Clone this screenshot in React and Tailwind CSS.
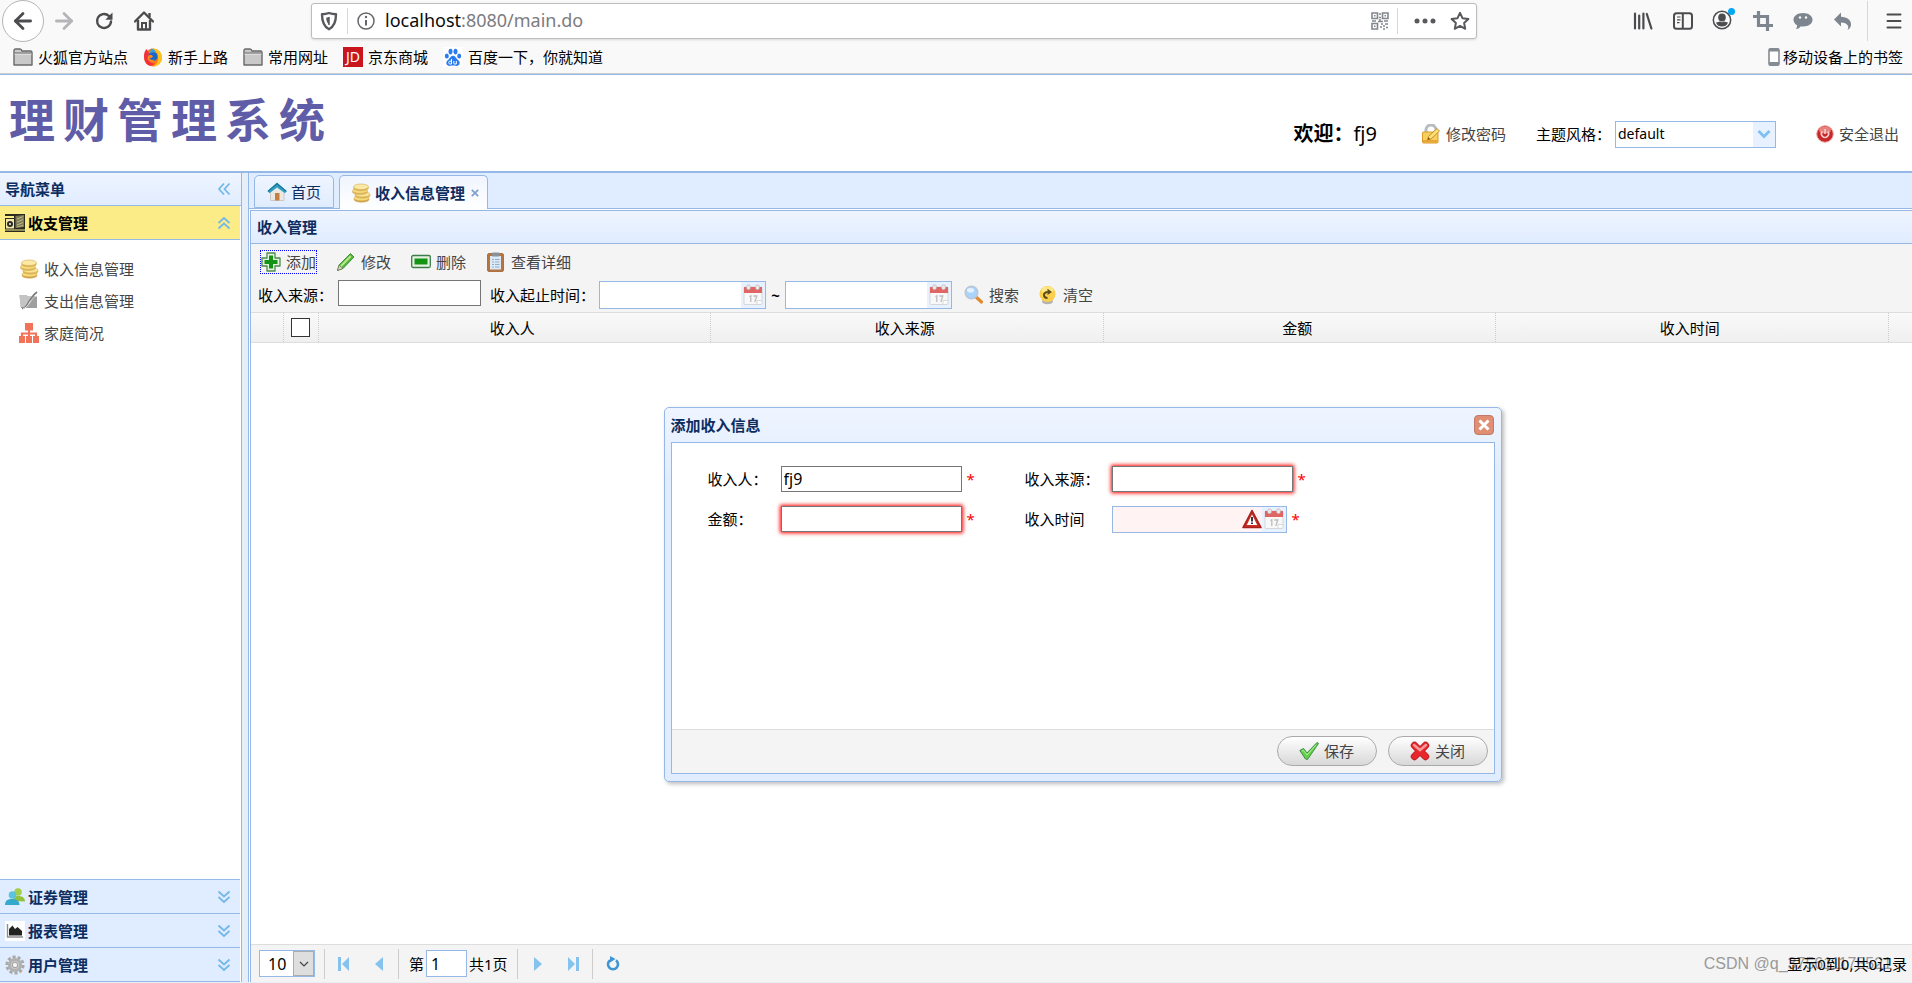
import React from 'react'
import { ArrowLeft, ArrowRight } from 'lucide-react'

/* ---------- browser icons ---------- */

const ReloadIcon = () => (
  <svg width="20" height="20" viewBox="0 0 20 20" fill="none" stroke="#4c4c4f" strokeWidth="2.4">
    <path d="M17 10.5a7 7 0 1 1-2.2-5.6l1.6 1.6" strokeLinecap="round" />
    <path d="M18.5 1.5v7.2h-7.2z" fill="#4c4c4f" stroke="none" />
  </svg>
)

const HomeIcon = () => (
  <svg width="20" height="20" viewBox="0 0 20 20" fill="none" stroke="#4c4c4f" strokeWidth="2.4">
    <path d="M1 10.5 10 1.5l9 9" strokeLinecap="round" strokeLinejoin="round" />
    <path d="M4 9v9.5h12V9" strokeLinejoin="round" />
    <path d="M8 18v-6h4v6" strokeWidth="2" />
    <path d="M15.5 2v4" />
  </svg>
)

const ShieldIcon = () => (
  <svg width="18" height="20" viewBox="0 0 18 20" fill="none" stroke="#59595d" strokeWidth="2.4">
    <path d="M9 2c2.6 1 5 1.2 7 1.2 0 7-1.2 12-7 15C3.2 15.2 2 10.2 2 3.2 4 3.2 6.4 3 9 2z" strokeLinejoin="round" />
    <path d="M9 6v7.5c-2-1.500-2.600-3.500-2.800-6.800z" fill="#59595d" stroke="none" />
    <path d="M9 6v8" strokeWidth="1.500" />
  </svg>
)

const InfoIcon = () => (
  <svg width="18" height="18" viewBox="0 0 18 18" fill="none" stroke="#66666a" strokeWidth="1.500">
    <circle cx="9" cy="9" r="8" />
    <path d="M9 8v5.500" strokeWidth="2" />
    <circle cx="9" cy="5" r="1.200" fill="#66666a" stroke="none" />
  </svg>
)

const QrIcon = () => (
  <svg width="18" height="18" viewBox="0 0 18 18" fill="none" stroke="#82878e" strokeWidth="1.600">
    <path d="M1 1h5.500v5.500H1zM11.500 1H17v5.500h-5.500zM1 11.500h5.500V17H1z" />
    <path d="M3 3.800h1.500M13.500 3.800H15M3 14.300h1.500M8 2h2M8 5.500h2M9 7v3M1 9h4M7 9.500h5M13 9h4M10 12h2M14 12h3M12 14h2M9 15h2M15 15.500h2M12 17h2" />
  </svg>
)

const StarIcon = () => (
  <svg width="20" height="20" viewBox="0 0 20 20" fill="none" stroke="#59595d" strokeWidth="2" strokeLinejoin="round">
    <path d="m10 1.800 2.500 5.400 5.900.7-4.300 4 1.100 5.900-5.200-2.900-5.200 2.900 1.100-5.900-4.300-4 5.900-.7z" />
  </svg>
)

const DotsIcon = () => (
  <svg width="22" height="6" viewBox="0 0 22 6" fill="#59595d">
    <circle cx="3" cy="3" r="2.500" />
    <circle cx="11" cy="3" r="2.500" />
    <circle cx="19" cy="3" r="2.500" />
  </svg>
)

const LibraryIcon = () => (
  <svg width="20" height="18" viewBox="0 0 20 18" fill="none" stroke="#4c4c4f" strokeWidth="2.200" strokeLinecap="round">
    <path d="M2 1.500v15M6.200 3.500v13M10.400 1.500v15M13.800 2l4.600 14.500" />
  </svg>
)

const SidebarIcon = () => (
  <svg width="20" height="18" viewBox="0 0 20 18" fill="none" stroke="#4c4c4f" strokeWidth="2">
    <rect x="1" y="1.200" width="18" height="15.600" rx="2.500" />
    <path d="M9.800 1.500v15" />
    <path d="M4 5h3.500M4 7.800h3.500M4 10.600h2.500" strokeWidth="1.200" />
  </svg>
)

const AccountIcon = () => (
  <svg width="24" height="24" viewBox="0 0 24 24">
    <circle cx="11" cy="13" r="8.700" fill="none" stroke="#4c4c4f" strokeWidth="1.500" />
    <ellipse cx="11" cy="10.500" rx="3.800" ry="4" fill="#4c4c4f" />
    <path d="M5 15.500c2 0 3-1 3.800-1 1.500 1 3 1 4.400 0 .8 0 2 1 3.800 1-1 3-3.500 4-6 4s-5-1-6-4z" fill="#4c4c4f" />
    <circle cx="20.500" cy="4.500" r="3.500" fill="#00a8f5" />
  </svg>
)

const CropIcon = () => (
  <svg width="20" height="20" viewBox="0 0 20 20" fill="none" stroke="#7d858e" strokeWidth="3.200">
    <path d="M5.500 0v14.500H20M0 5.500h14.500V20" />
  </svg>
)

const ChatIcon = () => (
  <svg width="20" height="18" viewBox="0 0 20 18">
    <path d="M10 1c5.500 0 9.500 2.800 9.500 6.800S15.500 14.500 10 14.500c-.8 0-1.500 0-2.200-.2-1 1.500-2.500 2.700-5 2.700 1-1 1.400-2.300 1.300-3.700C1.700 12 .5 10 .5 7.800.5 3.800 4.500 1 10 1z" fill="#7d858e" />
    <circle cx="7" cy="5.500" r="1.200" fill="#f9f9fa" />
    <circle cx="13" cy="5.500" r="1.200" fill="#f9f9fa" />
  </svg>
)

const UndoIcon = () => (
  <svg width="20" height="18" viewBox="0 0 20 18" fill="#7d858e">
    <path d="M8 .5v4.300c6 .2 10 3 10 7.700 0 2.500-1.300 4.500-3.500 5.500.8-1.500 1-3 .3-4.400C13.600 11.400 11.500 10.500 8 10.400v4.100L1 7.500z" />
  </svg>
)

const MenuIcon = () => (
  <svg width="16" height="16" viewBox="0 0 16 16" stroke="#4c4c4f" strokeWidth="2" strokeLinecap="round">
    <path d="M1.500 1.500h13M1.500 8h13M1.500 14.500h13" />
  </svg>
)

const FolderIcon = () => (
  <svg width="20" height="18" viewBox="0 0 20 18" fill="#c9c9c9" stroke="#6a6a6d" strokeWidth="1.400" strokeLinejoin="round">
    <path d="M1 2.500Q1 1 2.500 1h4.500Q8.500 1 9 3h8.500Q19 3 19 4.500V17H1z" />
    <path d="M1.500 6h17" stroke="#f0f0f0" strokeWidth="1" />
    <path d="M1.500 5h17" strokeWidth="1" />
  </svg>
)

const FirefoxIcon = () => (
  <svg width="20" height="20" viewBox="0 0 20 20">
    <circle cx="10" cy="10.500" r="9" fill="#ff7a1a" />
    <path d="M10 1.500c5 0 9 4 9 9s-4 9-9 9c3-2 6-5 5-10-.5-3-2-5-5-8z" fill="#ffc21c" />
    <path d="M1 9c0-3 1-6 3-7 0 2 1 2.500 2 3.500l-1 6c1 4 4 5 7 5-2 2-5 3-7 1.500C2.500 16.500 1 13 1 9z" fill="#f2303b" />
    <circle cx="10" cy="9.500" r="4.600" fill="#1b66c9" />
    <path d="M5 9c2-1.500 4-1 5 .2-1 1.800-2.500 2-3.800 1.800 1 2 3.500 2.500 5.500 1.500-2 3-6 2-7.200-.5z" fill="#ff8a1c" />
    <path d="M8 1.500c2.500.5 4.500 2 5 4.500-2-1-4-1-6 0z" fill="#2aa5e8" />
  </svg>
)

const JdIcon = () => (
  <span className="flex h-5 w-5 items-center justify-center bg-[#c9151e] text-sm leading-5 text-white">JD</span>
)

const BaiduIcon = () => (
  <svg width="20" height="20" viewBox="0 0 20 20">
    <rect width="20" height="20" fill="#fff" />
    <g fill="#2a7bf0">
      <ellipse cx="3.800" cy="9" rx="2" ry="2.600" />
      <ellipse cx="7.500" cy="4.600" rx="2" ry="2.800" />
      <ellipse cx="12.500" cy="4.600" rx="2" ry="2.800" />
      <ellipse cx="16.200" cy="9" rx="2" ry="2.600" />
      <path d="M10 8.800c2.200 0 2.800 2 4.200 3.400 1.600 1.500 2.800 2.300 2.400 4.300-.4 2.200-2.500 2.600-4.200 2.300-1.600-.3-3.200-.3-4.800 0-1.700.3-3.800-.1-4.200-2.300-.4-2 .8-2.800 2.400-4.300C7.200 10.800 7.800 8.800 10 8.800z" />
    </g>
    <path d="M8.500 12v5H6.800c-1.500 0-1.500-2.800 0-2.800h1.700M10.800 14v2.200q0 .8.800.8h1.700V14" fill="none" stroke="#fff" strokeWidth="1" />
  </svg>
)

const PhoneIcon = () => (
  <svg width="12" height="18" viewBox="0 0 12 18">
    <rect x="1" y=".8" width="10" height="16.400" rx="1.500" fill="#fff" stroke="#858b92" strokeWidth="1.600" />
    <path d="M1 .8h10v2.700H1zM1 14h10v3.200H1z" fill="#858b92" />
  </svg>
)

/* ---------- page icons ---------- */

const LockIcon = () => (
  <svg width="20" height="20" viewBox="0 0 20 20">
    <path d="M5 9V6a5 5 0 0 1 10 0v3" fill="none" stroke="#b9bcbf" strokeWidth="3" />
    <rect x="1.500" y="8" width="15.500" height="11" rx="1" fill="#f6cf5d" stroke="#d99a2a" />
    <path d="M2 16h14.500v2.500H2z" fill="#e8a736" />
    <path d="m6.500 16 1-3.500L16 4.500l2.500 2.500-8.500 8z" fill="#fbe07c" stroke="#c5851c" strokeWidth=".9" />
    <path d="m6.500 16 .8-2.800 2 1.900z" fill="#8a4d14" />
  </svg>
)

const PowerIcon = () => (
  <svg width="18" height="18" viewBox="0 0 18 18">
    <circle cx="9" cy="9" r="8.300" fill="#c8282a" stroke="#eaa9a7" />
    <ellipse cx="9" cy="5" rx="6" ry="3.600" fill="#e8807d" />
    <path d="M6.200 6.500a3.600 3.600 0 1 0 5.600 0" fill="none" stroke="#f6d0cf" strokeWidth="1.500" />
    <path d="M9 4v5" stroke="#f6d0cf" strokeWidth="1.500" />
  </svg>
)

const MoneyIcon = () => (
  <svg width="20" height="18" viewBox="0 0 20 18">
    <path d="M0 0h20v18H0z" fill="#2b2a20" />
    <path d="M0 2h9v2H0zM0 15.500h20v1H0z" fill="#fbec88" />
    <rect x="1" y="5" width="8" height="9.500" fill="#efe6a8" />
    <circle cx="5" cy="10" r="3" fill="#2b2a20" />
    <circle cx="5" cy="10" r="1" fill="#fff" />
    <path d="M10.500 2 19 1v12l-8.500 1z" fill="#7d7a55" />
    <path d="m12 5 6-2.500M12 8l6-2.500M12 11l6-2.500M12 13l6-1.500" stroke="#c5c08a" strokeWidth=".9" />
  </svg>
)

const CoinsIcon = () => (
  <svg width="20" height="20" viewBox="0 0 20 20" stroke="#d6ad55" strokeWidth=".6">
    <ellipse cx="10.500" cy="16.600" rx="7.500" ry="2.600" fill="#cfa04a" />
    <ellipse cx="10.500" cy="15.200" rx="7.500" ry="2.600" fill="#f7dc7c" />
    <ellipse cx="11.500" cy="12.600" rx="7.500" ry="2.600" fill="#deb65a" />
    <ellipse cx="11.500" cy="11.300" rx="7.500" ry="2.600" fill="#fae593" />
    <ellipse cx="9" cy="9" rx="7.500" ry="2.600" fill="#deb65a" />
    <ellipse cx="9" cy="7.700" rx="7.500" ry="2.600" fill="#f7dc7c" />
    <ellipse cx="10" cy="5" rx="7.500" ry="2.800" fill="#deb65a" />
    <ellipse cx="10" cy="3.800" rx="7.500" ry="2.800" fill="#fbeaa6" />
  </svg>
)

const ExpenseIcon = () => (
  <svg width="20" height="20" viewBox="0 0 20 20">
    <path d="M.5 4h7l1 1.500H18V17H2z" fill="#9f9f9f" />
    <path d="M.5 4h7l1 1.500H16L8 16H1.500z" fill="#c4c4c4" />
    <path d="M3 17.500C8 17 8 13 11 9s4-6 7-8" fill="none" stroke="#7a7a7a" strokeWidth="1.600" />
    <path d="M4 17.500C9 16.500 9 13 12 9.500" fill="none" stroke="#efefef" strokeWidth=".9" />
  </svg>
)

const FamilyIcon = () => (
  <svg width="20" height="20" viewBox="0 0 20 20" fill="#f0735a">
    <path d="M6 0h8v7.500H6zM0 13h6v7H0zM7 13h6v7H7zM14 13h6v7h-6z" />
    <path d="M10 6v8M3 14v-3.500h14V14" fill="none" stroke="#f0735a" strokeWidth="2.200" />
  </svg>
)

const PeopleIcon = () => (
  <svg width="20" height="18" viewBox="0 0 20 18">
    <circle cx="13" cy="4" r="3.800" fill="#a4cf4a" />
    <path d="M8 13c0-4 2-5 5-5s7 1 7 5.500z" fill="#93c23a" />
    <circle cx="7.500" cy="7" r="3.800" fill="#5cc3dd" />
    <path d="M0 17c0-4.500 3-6 7-6s7.500 1.500 7.500 6z" fill="#35a9cc" />
  </svg>
)

const ReportIcon = () => (
  <svg width="20" height="20" viewBox="0 0 20 20">
    <rect width="20" height="20" fill="#fff" />
    <path d="M2.500 3v13H18" fill="none" stroke="#8d8d8d" strokeWidth="1.400" />
    <path d="M4 14.500V8l3.500-3.500L10 8l2.500-2L17 10v4.500z" fill="#232323" />
  </svg>
)

const GearIcon = () => (
  <svg width="20" height="20" viewBox="0 0 20 20">
    <circle cx="10" cy="10" r="8" fill="none" stroke="#a9a9a9" strokeWidth="3.200" strokeDasharray="3.100 1.900" />
    <circle cx="10" cy="10" r="5.600" fill="#c9c9c9" stroke="#b1b1b1" strokeWidth="3" />
    <circle cx="10" cy="10" r="2.700" fill="#f3f3f3" stroke="#8f8f8f" strokeWidth=".8" />
  </svg>
)

const HouseIcon = () => (
  <svg width="20" height="20" viewBox="0 0 20 20">
    <path d="M3.500 9.500 10 4l7 5.500V18.500H3.500z" fill="#ebe8e3" stroke="#c6c1b8" strokeWidth=".8" />
    <path d="M8 11h4.500v7.500H8z" fill="#c87f3d" />
    <path d="M10 .8.500 9l2 2.300L10 5.500l8 5.800 1.700-2.300z" fill="#2f9fc4" />
    <path d="M10 .8.500 9l.8.800L10 2.500 19 9.700l.7-.7z" fill="#167599" />
  </svg>
)

const AddIcon = () => (
  <svg width="20" height="20" viewBox="0 0 20 20">
    <path d="M6 1h8v5h5v8h-5v5H6v-5H1V6h5z" fill="#e6f2e0" stroke="#4b8a4b" strokeWidth="1.300" strokeLinejoin="round" />
    <path d="M8 3.500h4V8h4.500v4H12v4.500H8V12H3.500V8H8z" fill="#149414" />
  </svg>
)

const EditIcon = () => (
  <svg width="20" height="20" viewBox="0 0 20 20">
    <path d="M14.500 1.500 18 5 7 16.500l-5.500 2 1.500-5.500z" fill="#53b83a" stroke="#2d7d26" strokeWidth=".8" />
    <path d="m14 3.500 1.500 1.300L5.500 15 4 13.700z" fill="#b9ea8f" />
    <path d="m3 13-1.500 5.500L7 16.500z" fill="#d8d2b8" stroke="#5c6b4d" strokeWidth=".6" />
  </svg>
)

const RemoveIcon = () => (
  <svg width="20" height="20" viewBox="0 0 20 20">
    <rect x=".7" y="3.500" width="18.600" height="12" rx="1.500" fill="#e6f2e0" stroke="#3d7d4b" strokeWidth="1.300" />
    <rect x="3.500" y="6.500" width="13" height="6" fill="#149414" />
  </svg>
)

const DetailIcon = () => (
  <svg width="20" height="20" viewBox="0 0 20 20">
    <rect x="1.500" y="1.500" width="16" height="18" rx="1.500" fill="#b8743c" stroke="#9a6336" strokeWidth=".8" />
    <path d="M4 4h11v13.500H4z" fill="#dce9f6" />
    <path d="M6 7.500h2M9 7.500h4.500M6 10h2M9 10h4.500M6 12.500h2M9 12.500h4.500M6 15h2M9 15h4.500" stroke="#94aec9" strokeWidth="1.200" />
    <rect x="6" y=".5" width="7.500" height="4" rx="1" fill="#8a9299" />
  </svg>
)

const CalendarIcon = () => (
  <svg width="20" height="22" viewBox="0 0 20 22">
    <rect x="1" y="3" width="18" height="17.500" rx="1" fill="#f8f8f8" stroke="#cfcfcf" strokeWidth=".8" />
    <path d="M1 3h18v6H1z" fill="#e06666" />
    <rect x="3.500" y=".8" width="4" height="5" rx="2" fill="#e8e8e8" stroke="#b5a5a5" strokeWidth=".5" />
    <rect x="12.500" y=".8" width="4" height="5" rx="2" fill="#e8e8e8" stroke="#b5a5a5" strokeWidth=".5" />
    <path d="m6.500 12.800 1.300-1v6.200M10.300 12h3.500l-2 6" fill="none" stroke="#bdbdbd" strokeWidth="1.300" />
    <path d="M14 20.500v-4h5" fill="#fff" stroke="#cfcfcf" strokeWidth=".8" />
  </svg>
)

const SearchIcon = () => (
  <svg width="20" height="20" viewBox="0 0 20 20">
    <path d="m12 12 5.500 5" stroke="#e08b2f" strokeWidth="3.200" strokeLinecap="round" />
    <circle cx="7.500" cy="7.500" r="6.200" fill="#a9d4fb" stroke="#b9c6d6" strokeWidth="1.600" />
    <ellipse cx="6.500" cy="5.200" rx="3.500" ry="2.300" fill="#e4f3ff" />
  </svg>
)

const ClearIcon = () => (
  <svg width="20" height="20" viewBox="0 0 20 20">
    <ellipse cx="9.500" cy="16.500" rx="5.500" ry="2.800" fill="#b3b3b3" />
    <circle cx="9.500" cy="9" r="8" fill="#fbcf4b" />
    <ellipse cx="9.500" cy="5" rx="6" ry="3.600" fill="#fde884" />
    <path d="M9.500 13C5 13 4.500 7 9.800 7" fill="none" stroke="#5b4a1a" strokeWidth="2" />
    <path d="M9.500 3.800 14 7l-4.500 3z" fill="#5b4a1a" />
  </svg>
)

const WarnIcon = () => (
  <svg width="20" height="20" viewBox="0 0 20 20">
    <path d="M10 1.500 19 18.500H1z" fill="#c4302a" stroke="#a8201b" strokeWidth="1.600" strokeLinejoin="round" />
    <path d="M10 5.500 15.200 16H4.800z" fill="#fff" />
    <path d="M10 8v4.500M10 13.500V15" stroke="#222" strokeWidth="1.800" />
  </svg>
)

const OkIcon = () => (
  <svg width="20" height="20" viewBox="0 0 20 20">
    <path d="M.8 9.500 4.500 7.500 8 12 18 1.500l1.500 1L8.500 18.500 6.500 18z" fill="#62cf45" stroke="#3c8f4a" strokeWidth="1" strokeLinejoin="round" />
    <path d="m3 10 1.500-.5L8 14 17 4" fill="none" stroke="#b6f09c" strokeWidth="1" />
  </svg>
)

const CancelIcon = () => (
  <svg width="20" height="20" viewBox="0 0 20 20">
    <path d="m4.500 4.500 11 11M15.500 4.500l-11 11" stroke="#b81f23" strokeWidth="7.400" strokeLinecap="round" />
    <path d="m4.500 4.500 11 11M15.500 4.500l-11 11" stroke="#e8272c" strokeWidth="5.800" strokeLinecap="round" />
    <path d="M4 4 10 9l6-5" fill="none" stroke="#f79b9b" strokeWidth="2.500" strokeLinecap="round" />
  </svg>
)

const DoubleChevron = ({ className }) => (
  <svg className={className} width="14" height="14" viewBox="0 0 14 14" fill="none" stroke="#74b8ea" strokeWidth="1.800">
    <path d="m1.500 1.500 5.500 5 5.500-5M1.500 7l5.500 5L12.500 7" />
  </svg>
)

const DropArrow = () => (
  <svg width="14" height="10" viewBox="0 0 14 10" fill="none" stroke="#7fc0f2" strokeWidth="2.800">
    <path d="m1.500 2 5.500 5.500L12.500 2" />
  </svg>
)

const FirstIcon = () => (
  <svg width="12" height="14" viewBox="0 0 12 14" fill="#86c2ee">
    <path d="M0 0h3v14H0zM11 0v14L4 7z" />
  </svg>
)

const PrevIcon = () => (
  <svg width="8" height="14" viewBox="0 0 8 14" fill="#86c2ee">
    <path d="M8 0v14L0 7z" />
  </svg>
)

const NextIcon = () => (
  <svg width="8" height="14" viewBox="0 0 8 14" fill="#86c2ee">
    <path d="M0 0v14l8-7z" />
  </svg>
)

const LastIcon = () => (
  <svg width="12" height="14" viewBox="0 0 12 14" fill="#86c2ee">
    <path d="M9 0h3v14H9zM1 0v14l7-7z" />
  </svg>
)

const RefreshIcon = () => (
  <svg width="14" height="16" viewBox="0 0 14 16">
    <path d="M10 4.300A5 5 0 1 1 4 4.300" fill="none" stroke="#3d95d3" strokeWidth="2.600" />
    <path d="M4 0v6.500L9.500 3z" fill="#3d95d3" />
  </svg>
)

/* ---------- pieces ---------- */

const bookmarks = [
  { label: '火狐官方站点', icon: <FolderIcon /> },
  { label: '新手上路', icon: <FirefoxIcon /> },
  { label: '常用网址', icon: <FolderIcon /> },
  { label: '京东商城', icon: <JdIcon /> },
  { label: '百度一下，你就知道', icon: <BaiduIcon /> },
]

const menuItems = [
  { label: '收入信息管理', icon: <CoinsIcon /> },
  { label: '支出信息管理', icon: <ExpenseIcon /> },
  { label: '家庭简况', icon: <FamilyIcon /> },
]

const closedGroups = [
  { label: '证券管理', icon: <PeopleIcon /> },
  { label: '报表管理', icon: <ReportIcon /> },
  { label: '用户管理', icon: <GearIcon /> },
]

const columns = ['收入人', '收入来源', '金额', '收入时间']

function LinkButton({ icon, children, className = '' }) {
  return (
    <button type="button" className={`flex h-[22px] items-center gap-[5px] text-[#444] ${className}`}>
      {icon}
      <span>{children}</span>
    </button>
  )
}

function DateBox({ label, invalid, className }) {
  return (
    <div className={`flex border border-[#95b8e7] ${className}`}>
      <input
        type="text"
        aria-label={label}
        className={`min-w-0 flex-1 px-1 outline-none ${invalid ? 'bg-[#fff3f3]' : 'bg-white'}`}
      />
      {invalid && (
        <span className="flex w-5 items-center justify-center bg-[#fff3f3]">
          <WarnIcon />
        </span>
      )}
      <button type="button" aria-label="选择日期" className="flex w-6 items-center justify-center bg-[#e8f1ff]">
        <CalendarIcon />
      </button>
    </div>
  )
}

function BrowserChrome() {
  return (
    <div className="shrink-0 border-b border-[#cfcfd2] bg-[#f9f9fa]">
      <div className="flex h-[41px] items-center">
        <div className="flex w-[311px] shrink-0 items-center pl-[2px]">
          <button type="button" aria-label="后退" className="flex h-[42px] w-[42px] items-center justify-center rounded-full border border-[#b5b5b8] bg-white text-[#4c4c4f]">
            <ArrowLeft size={26} strokeWidth={2.6} />
          </button>
          <button type="button" aria-label="前进" className="flex w-10 justify-center text-[#b5b5b8]">
            <ArrowRight size={26} strokeWidth={2.6} />
          </button>
          <button type="button" aria-label="刷新" className="flex w-10 justify-center"><ReloadIcon /></button>
          <button type="button" aria-label="主页" className="flex w-10 justify-center"><HomeIcon /></button>
        </div>
        <div className="flex h-9 min-w-0 flex-1 items-center rounded-[3px] border border-[#bdbdc0] bg-white pr-[6px] pl-2 shadow-sm">
          <ShieldIcon />
          <span className="mx-[9px] h-[26px] w-px bg-[#d7d7db]" />
          <InfoIcon />
          <span className="ml-[10px] flex-1 pb-px text-[18px] leading-6 text-[#7c7c80]">
            <span className="text-[#0c0c0d]">localhost</span>:8080/main.do
          </span>
          <QrIcon />
          <span className="mr-4 ml-2 h-[26px] w-px bg-[#d7d7db]" />
          <DotsIcon />
          <span className="w-[14px]" />
          <StarIcon />
        </div>
        <div className="flex w-[435px] shrink-0 items-center justify-end pr-[10px]">
          <div className="flex items-center">
            <span className="flex w-10 justify-center"><LibraryIcon /></span>
            <span className="flex w-10 justify-center"><SidebarIcon /></span>
            <span className="flex w-10 justify-center pb-1"><AccountIcon /></span>
            <span className="flex w-10 justify-center"><CropIcon /></span>
            <span className="flex w-10 justify-center"><ChatIcon /></span>
            <span className="flex w-10 justify-center"><UndoIcon /></span>
          </div>
          <span className="mr-[18px] ml-1 h-10 w-px bg-[#d7d7db]" />
          <MenuIcon />
        </div>
      </div>
      <div className="flex h-8 items-center justify-between pr-[9px] pb-px pl-[13px]">
        <div className="flex gap-[15px]">
          {bookmarks.map((b) => (
            <a key={b.label} href="#" className="flex items-center gap-[5px] leading-5">
              {b.icon}
              {b.label}
            </a>
          ))}
        </div>
        <a href="#" className="flex items-center gap-[3px] leading-5">
          <PhoneIcon />
          移动设备上的书签
        </a>
      </div>
    </div>
  )
}

function Header() {
  return (
    <header className="flex h-[99px] shrink-0 items-center justify-between border-t border-b-2 border-[#95b8e7] bg-white pr-[13px] pl-[9px]">
      <h1 className="flex gap-2 pb-2 text-[46px] leading-none font-bold text-[#5f5ca8]">
        {[...'理财管理系统'].map((ch, i) => (
          <span key={i}>{ch}</span>
        ))}
      </h1>
      <div className="flex items-center pt-[22px]">
        <div className="mr-11 text-xl leading-7">
          <b>欢迎：</b>fj9
        </div>
        <LinkButton icon={<LockIcon />} className="mr-[30px]">修改密码</LinkButton>
        <label htmlFor="theme">主题风格：</label>
        <div className="relative ml-1 flex h-[27px] w-[161px] border border-[#95b8e7]">
          <select id="theme" className="w-full appearance-none bg-white pl-[2px] text-sm leading-6 outline-none">
            <option>default</option>
          </select>
          <span className="pointer-events-none absolute inset-y-0 right-0 flex w-[22px] items-center justify-center bg-[#e8f1ff]">
            <DropArrow />
          </span>
        </div>
        <LinkButton icon={<PowerIcon />} className="ml-10">安全退出</LinkButton>
      </div>
    </header>
  )
}

function Sidebar() {
  return (
    <aside className="flex w-[242px] shrink-0 flex-col border-r border-[#95b8e7] bg-white">
      <div className="flex h-[33px] items-center justify-between border-b border-[#95b8e7] bg-linear-to-b from-[#eff5ff] to-[#e0ecff] pr-[10px] pl-[5px] font-bold text-[#0e2d5f]">
        导航菜单
        <DoubleChevron className="rotate-90" />
      </div>
      <div className="mr-px flex h-[34px] items-center border-b border-[#95b8e7] bg-[#fbec88] pr-[9px] pl-[5px] font-bold">
        <MoneyIcon />
        <span className="ml-[3px] flex-1">收支管理</span>
        <DoubleChevron className="rotate-180" />
      </div>
      <nav className="flex flex-1 flex-col gap-3 pt-[19px] pl-[19px]">
        {menuItems.map((m) => (
          <a key={m.label} href="#" className="flex items-center gap-[5px] leading-5 text-[#444]">
            {m.icon}
            {m.label}
          </a>
        ))}
      </nav>
      <div className="mr-px border-b border-[#95b8e7]">
        {closedGroups.map((g) => (
          <div key={g.label} className="flex h-[34px] items-center border-t border-[#95b8e7] bg-[#e0ecff] pr-[9px] pl-[5px] font-bold text-[#0e2d5f]">
            {g.icon}
            <span className="ml-[3px] flex-1">{g.label}</span>
            <DoubleChevron />
          </div>
        ))}
      </div>
    </aside>
  )
}

function Toolbar() {
  return (
    <div className="flex flex-col gap-2 bg-[#f4f4f4] pt-[7px] pb-[3px] pl-[7px]">
      <div className="flex gap-5 pl-[3px]">
        <LinkButton icon={<AddIcon />} className="outline outline-dotted outline-[#0000ff]">添加</LinkButton>
        <LinkButton icon={<EditIcon />}>修改</LinkButton>
        <LinkButton icon={<RemoveIcon />}>删除</LinkButton>
        <LinkButton icon={<DetailIcon />}>查看详细</LinkButton>
      </div>
      <div className="flex h-7 items-center">
        <label htmlFor="source">收入来源：</label>
        <input id="source" type="text" className="mr-[9px] mb-1 ml-[5px] h-[26px] w-[143px] border border-[#767676] bg-white px-1 outline-none" />
        <span>收入起止时间：</span>
        <DateBox label="开始时间" className="ml-1 h-7 w-[167px]" />
        <span className="w-[19px] text-center font-bold">~</span>
        <DateBox label="结束时间" className="mr-3 h-7 w-[167px]" />
        <LinkButton icon={<SearchIcon />} className="mr-[19px]">搜索</LinkButton>
        <LinkButton icon={<ClearIcon />}>清空</LinkButton>
      </div>
    </div>
  )
}

function Grid() {
  return (
    <table className="w-full table-fixed border-y border-[#ddd]">
      <colgroup>
        <col className="w-[32px]" />
        <col className="w-[35px]" />
        {columns.map((c) => (
          <col key={c} />
        ))}
        <col className="w-6" />
      </colgroup>
      <thead>
        <tr className="h-[30px] bg-linear-to-b from-[#f9f9f9] to-[#efefef]">
          <th className="border-r border-dotted border-[#ccc]" />
          <th className="border-r border-dotted border-[#ccc]">
            <input type="checkbox" aria-label="全选" className="mx-auto block h-[19px] w-[19px] appearance-none border border-[#333] bg-white" />
          </th>
          {columns.map((c) => (
            <th key={c} className="border-r border-dotted border-[#ccc] pr-1 font-normal">{c}</th>
          ))}
          <th />
        </tr>
      </thead>
    </table>
  )
}

function Pager() {
  return (
    <div className="relative flex h-[38px] shrink-0 items-center border-t border-[#ddd] bg-[#f4f4f4] pr-[5px] pl-2">
      <div className="relative h-[27px] w-14 border border-[#95b8e7]">
        <select aria-label="每页条数" className="h-full w-full appearance-none bg-white pl-2 text-base outline-none">
          <option>10</option>
        </select>
        <span className="pointer-events-none absolute inset-y-0 right-0 flex w-[21px] items-center justify-center border border-[#acacac] bg-[#dedede]">
          <svg width="10" height="6" viewBox="0 0 10 6" fill="none" stroke="#444" strokeWidth="1.200">
            <path d="m1 1 4 4 4-4" />
          </svg>
        </span>
      </div>
      <span className="mr-[13px] ml-[9px] h-[30px] w-px bg-[#ccc]" />
      <button type="button" aria-label="首页"><FirstIcon /></button>
      <button type="button" aria-label="上一页" className="ml-[25px]"><PrevIcon /></button>
      <span className="mr-[10px] ml-[15px] h-[30px] w-px bg-[#ccc]" />
      <label htmlFor="page">第</label>
      <input id="page" type="text" defaultValue="1" className="mx-[2px] h-[27px] w-[41px] border border-[#95b8e7] bg-white px-1 text-base outline-none" />
      <span>共1页</span>
      <span className="mr-4 ml-[9px] h-[30px] w-px bg-[#ccc]" />
      <button type="button" aria-label="下一页"><NextIcon /></button>
      <button type="button" aria-label="末页" className="ml-[25px]"><LastIcon /></button>
      <span className="mx-[13px] h-[30px] w-px bg-[#ccc]" />
      <button type="button" aria-label="重新加载"><RefreshIcon /></button>
      <span className="absolute right-5 font-['Liberation_Sans',sans-serif] text-base text-[#9a9a9a]">CSDN @q_375611175521</span>
      <span className="relative ml-auto">显示0到0,共0记录</span>
    </div>
  )
}

function Field({ id, label, invalid, value }) {
  return (
    <>
      <label htmlFor={id}>{label}</label>
      <div className="flex items-center gap-[5px]">
        <input
          id={id}
          type="text"
          defaultValue={value}
          className={`h-[26px] w-[181px] border border-[#767676] bg-white px-[2px] text-base outline-none ${invalid ? 'shadow-[0_0_4px_1px_#ff0000]' : ''}`}
        />
        <span className="text-[#f00]">*</span>
      </div>
    </>
  )
}

function PillButton({ icon, children }) {
  return (
    <button type="button" className="flex h-[30px] w-[100px] items-center justify-center gap-[5px] rounded-full border border-[#aaa] bg-linear-to-b from-white to-[#d8d8d8] text-[#444]">
      {icon}
      {children}
    </button>
  )
}

function AddDialog() {
  return (
    <div role="dialog" aria-label="添加收入信息" className="pointer-events-auto flex h-[375px] w-[838px] flex-col rounded-[5px] border border-[#95b8e7] bg-linear-to-b from-[#eff5ff] to-[#e0ecff] to-20% px-[6px] pb-[7px] shadow-[2px_2px_4px_#bbb]">
      <div className="flex h-[34px] items-center justify-between pr-px font-bold text-[#0e2d5f]">
        添加收入信息
        <button type="button" aria-label="关闭" className="flex h-5 w-5 items-center justify-center rounded-[4px] border border-[#c07a68] bg-[#e08f74]">
          <svg width="12" height="12" viewBox="0 0 12 12" stroke="#fff" strokeWidth="3">
            <path d="m1.500 1.500 9 9M10.500 1.500l-9 9" />
          </svg>
        </button>
      </div>
      <div className="flex flex-1 flex-col border border-[#95b8e7] bg-white">
        <div className="grid grid-cols-[73px_244px_87px_auto] grid-rows-[26px_26px] items-center justify-start gap-y-[14px] pt-[23px] pl-9">
          <Field id="person" label="收入人：" value="fj9" />
          <Field id="from" label="收入来源：" invalid />
          <Field id="amount" label="金额：" invalid />
          <span>收入时间</span>
          <div className="flex items-center gap-[5px]">
            <DateBox label="收入时间" invalid className="h-[27px] w-[175px]" />
            <span className="text-[#f00]">*</span>
          </div>
        </div>
        <div className="mt-auto flex h-11 items-center justify-end gap-[11px] border-t border-[#ddd] bg-[#f4f4f4] pt-[6px] pr-[6px] pb-[7px]">
          <PillButton icon={<OkIcon />}>保存</PillButton>
          <PillButton icon={<CancelIcon />}>关闭</PillButton>
        </div>
      </div>
    </div>
  )
}

function MainPanel() {
  return (
    <main className="flex min-w-0 flex-1 flex-col border-l border-[#95b8e7] bg-white">
      {/* tab strip */}
      <div className="flex h-9 shrink-0 items-end gap-[5px] border-b border-[#95b8e7] bg-[#e0ecff] pl-[5px]">
        <button type="button" className="flex h-[33px] items-center gap-1 rounded-t-[5px] border border-[#95b8e7] bg-linear-to-b from-[#eff5ff] to-[#e0ecff] px-3 text-[#0e2d5f]">
          <HouseIcon />
          首页
        </button>
        <div className="-mb-px flex h-[34px] items-center gap-1 rounded-t-[5px] border border-b-0 border-[#95b8e7] bg-linear-to-b from-[#eff5ff] to-white pr-2 pl-[11px] font-bold text-[#0e2d5f]">
          <CoinsIcon />
          收入信息管理
          <button type="button" aria-label="关闭标签" className="ml-[2px]">
            <svg width="8" height="8" viewBox="0 0 8 8" stroke="#7f9fd0" strokeWidth="1.800">
              <path d="m.8.8 6.400 6.400M7.200.8.8 7.200" />
            </svg>
          </button>
        </div>
      </div>
      <section className="relative mt-px ml-px flex min-h-0 flex-1 flex-col border-t border-l border-[#95b8e7]">
        <h2 className="flex h-[33px] shrink-0 items-center border-b border-[#95b8e7] bg-linear-to-b from-[#eff5ff] to-[#e0ecff] pl-[6px] font-bold text-[#0e2d5f]">收入管理</h2>
        <Toolbar />
        <div className="flex-1">
          <Grid />
        </div>
        <Pager />
        <div className="pointer-events-none absolute inset-0 flex items-center justify-center pb-1 pl-[2px]">
          <AddDialog />
        </div>
      </section>
    </main>
  )
}

export default function App() {
  return (
    <div className="flex h-screen flex-col overflow-hidden bg-white font-['Noto_Sans','Noto_Sans_CJK_SC',sans-serif] text-[15px] leading-5 text-black">
      <BrowserChrome />
      <Header />
      <div className="flex min-h-0 flex-1 gap-[6px] bg-[#e6eef8] pb-px">
        <Sidebar />
        <MainPanel />
      </div>
    </div>
  )
}
